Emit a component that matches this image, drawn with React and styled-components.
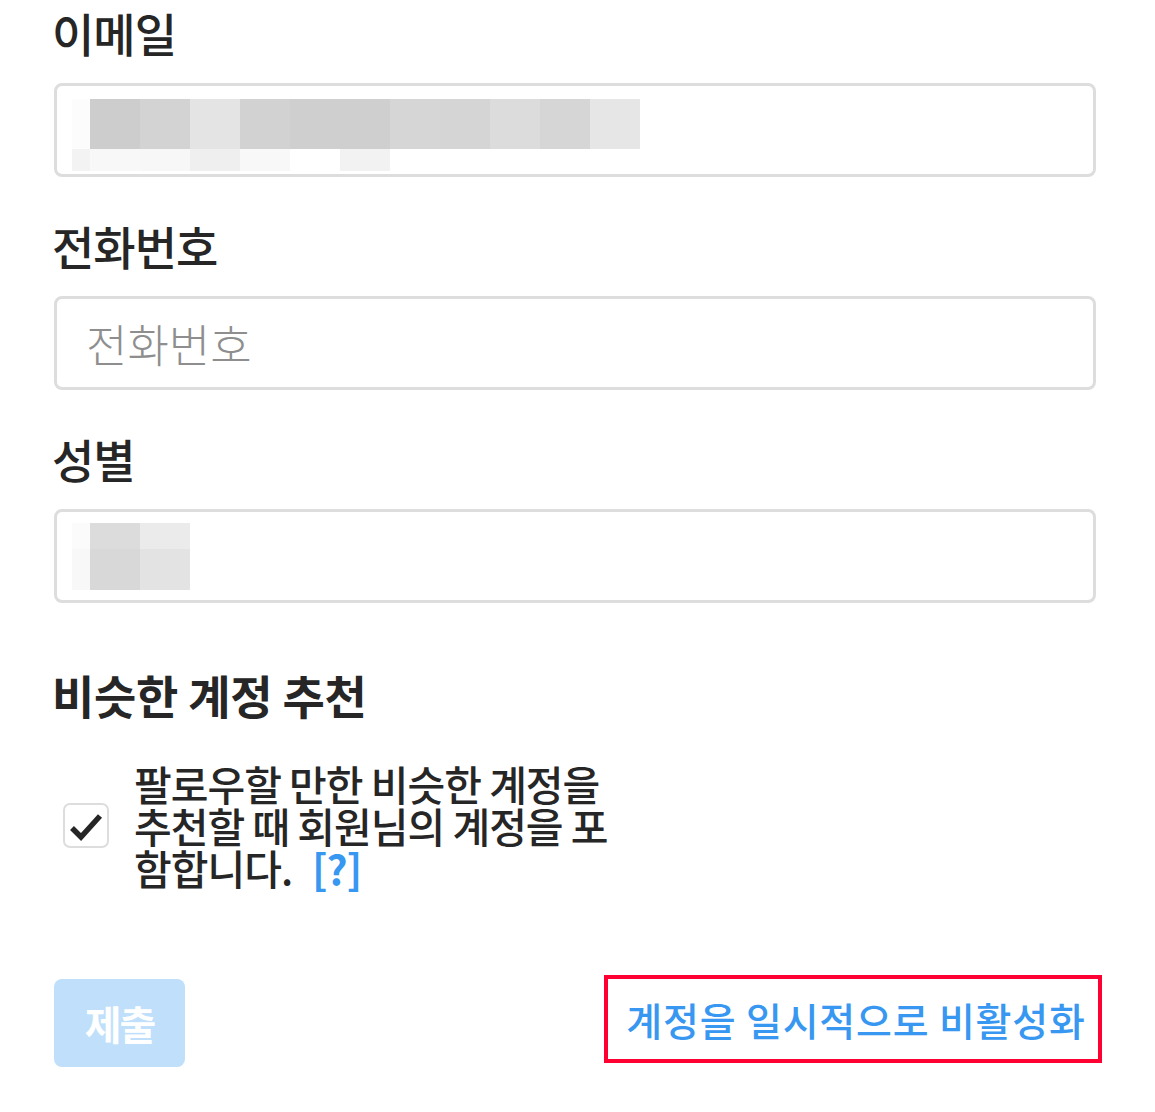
import React from 'react'
import styled, { createGlobalStyle } from 'styled-components'

const colors = {
  text: '#262626',
  placeholder: '#8e8e8e',
  border: '#dddddd',
  blue: '#3897f0',
  paleBlue: '#bfdffb',
  red: '#ff0033',
}

const GlobalStyle = createGlobalStyle`
  body {
    margin: 0;
    background: #fff;
    font-family: "Noto Sans CJK KR", "Noto Sans", sans-serif;
    color: ${colors.text};
  }
`

const Page = styled.div`
  width: 1155px;
  box-sizing: border-box;
  padding: 4px 59px 40px 54px;
`

const Field = styled.div`
  display: flex;
  flex-direction: column;
  margin-bottom: 40px;
`

const Label = styled.div`
  font-size: 46px;
  line-height: 56px;
  font-weight: 500;
  letter-spacing: -1px;
  margin: 0 0 23px -2px;
`

const InputBox = styled.div`
  box-sizing: border-box;
  height: 94px;
  border: 3px solid ${colors.border};
  border-radius: 8px;
  padding: ${p => p.$padTop}px 15px 0 15px;
  display: flex;
  align-items: ${p => (p.$center ? 'center' : 'flex-start')};
`

const Placeholder = styled.span`
  font-size: 45px;
  font-weight: 300;
  color: ${colors.placeholder};
  padding-left: 14px;
  line-height: 1;
`

const Pixels = styled.div`
  display: flex;
  flex-direction: column;
`

const PixelRow = styled.div`
  display: flex;
  height: ${p => p.$h}px;
`

const Cell = styled.div`
  width: ${p => p.$w}px;
  background: ${p => p.$bg};
`

const Heading = styled.div`
  font-size: 46px;
  line-height: 56px;
  font-weight: 600;
  letter-spacing: -0.3px;
  margin: 63px 0 0 -2px;
`

const CheckRow = styled.div`
  display: flex;
  align-items: flex-start;
  gap: 25px;
  padding-left: 9px;
  margin-top: 40px;
`

const Checkbox = styled.div`
  box-sizing: border-box;
  flex: none;
  width: 46px;
  height: 45px;
  margin-top: 41px;
  border: 2px solid ${colors.border};
  border-radius: 7px;
  display: flex;
  align-items: center;
  justify-content: center;
`

const Description = styled.p`
  margin: 0;
  font-size: 41px;
  line-height: 42px;
  font-weight: 500;
  letter-spacing: -1px;
`

const HelpLink = styled.a`
  color: ${colors.blue};
  text-decoration: none;
  font-weight: 600;
  margin-left: 20px;
`

const Actions = styled.div`
  display: flex;
  justify-content: space-between;
  align-items: flex-start;
  margin-top: 87px;
`

const SubmitButton = styled.button`
  width: 131px;
  height: 88px;
  margin-top: 4px;
  border: none;
  border-radius: 8px;
  background: ${colors.paleBlue};
  color: #fff;
  font-family: inherit;
  font-size: 40px;
  font-weight: 600;
  letter-spacing: -2px;
  padding: 0;
`

const DeactivateLink = styled.a`
  box-sizing: border-box;
  width: 498px;
  height: 88px;
  margin-right: -6px;
  border: 4px solid ${colors.red};
  display: flex;
  align-items: center;
  justify-content: center;
  padding-left: 6px;
  color: ${colors.blue};
  font-size: 39px;
  font-weight: 500;
  letter-spacing: 0.8px;
  text-decoration: none;
`

const emailPixels = [
  { h: 50, cells: ['#fcfcfc', '#cdcdcd', '#d3d3d3', '#e4e4e4', '#d2d2d2', '#cfcfcf', '#cfcfcf', '#d6d6d6', '#d5d5d5', '#dcdcdc', '#d6d6d6', '#e6e6e6'] },
  { h: 22, cells: ['#f3f3f3', '#f8f8f8', '#f7f7f7', '#efefef', '#f8f8f8', '#ffffff', '#f2f2f2'] },
]

const genderPixels = [
  { h: 26, cells: ['#fbfbfb', '#dcdcdc', '#ebebeb'] },
  { h: 41, cells: ['#f8f8f8', '#d8d8d8', '#e3e3e3'] },
]

const Obscured = ({ rows }) => (
  <Pixels>
    {rows.map((row, i) => (
      <PixelRow key={i} $h={row.h}>
        {row.cells.map((bg, j) => (
          <Cell key={j} $w={j === 0 ? 18 : 50} $bg={bg} />
        ))}
      </PixelRow>
    ))}
  </Pixels>
)

const CheckIcon = () => (
  <svg width="34" height="30" viewBox="0 0 34 30">
    <polyline points="3,17 12,26 31,5" fill="none" stroke="#262626" strokeWidth="5.5" />
  </svg>
)

export default function App() {
  return (
    <Page>
      <GlobalStyle />
      <Field>
        <Label>이메일</Label>
        <InputBox $padTop={13}>
          <Obscured rows={emailPixels} />
        </InputBox>
      </Field>
      <Field>
        <Label>전화번호</Label>
        <InputBox $center $padTop={0}>
          <Placeholder>전화번호</Placeholder>
        </InputBox>
      </Field>
      <Field>
        <Label>성별</Label>
        <InputBox $padTop={11}>
          <Obscured rows={genderPixels} />
        </InputBox>
      </Field>
      <Heading>비슷한 계정 추천</Heading>
      <CheckRow>
        <Checkbox>
          <CheckIcon />
        </Checkbox>
        <Description>
          팔로우할 만한 비슷한 계정을
          <br />
          추천할 때 회원님의 계정을 포
          <br />
          함합니다.
          <HelpLink href="#">[?]</HelpLink>
        </Description>
      </CheckRow>
      <Actions>
        <SubmitButton>제출</SubmitButton>
        <DeactivateLink href="#">계정을 일시적으로 비활성화</DeactivateLink>
      </Actions>
    </Page>
  )
}
